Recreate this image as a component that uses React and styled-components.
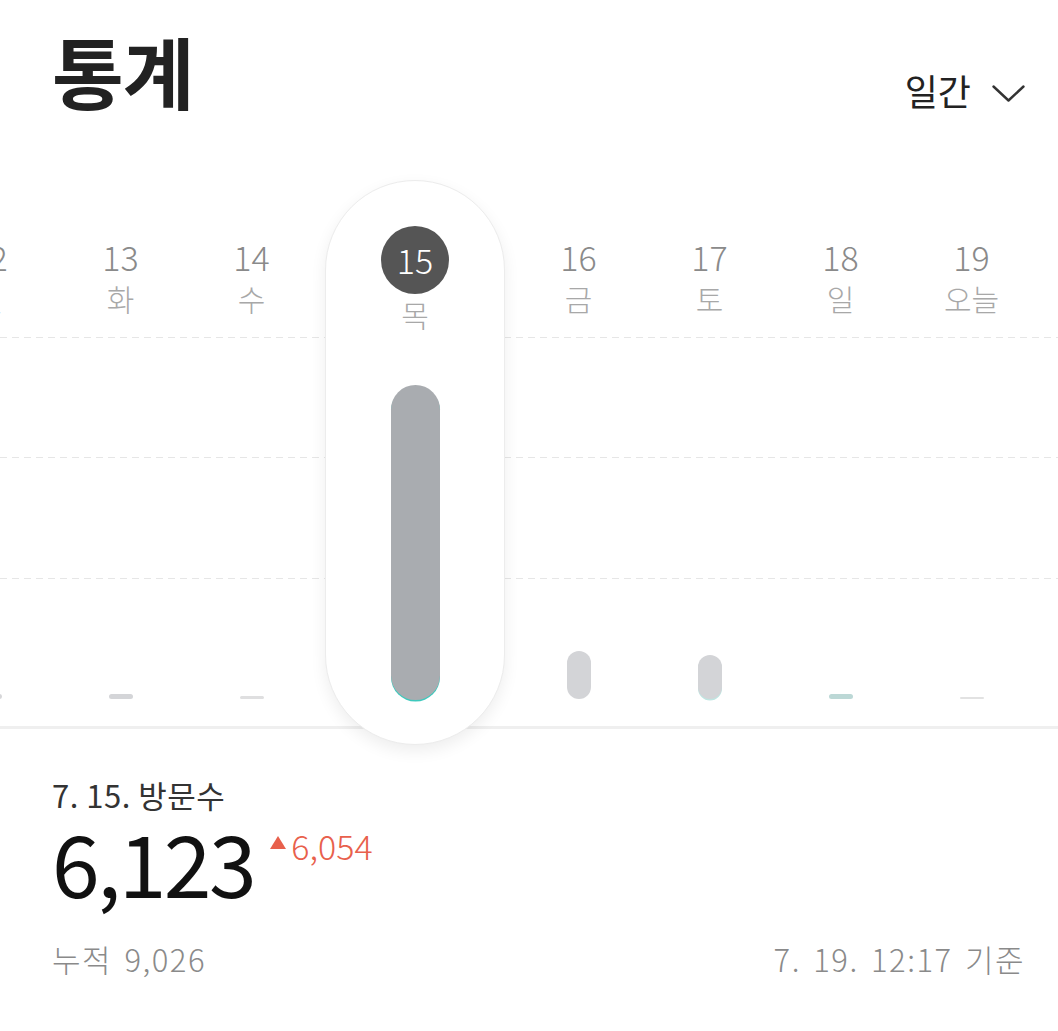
import React from "react";
import styled, { createGlobalStyle } from "styled-components";

const Global = createGlobalStyle`
  html, body { margin: 0; padding: 0; background: #ffffff; }
  body {
    font-family: "Noto Sans CJK KR", "Noto Sans", sans-serif;
    color: #222;
    overflow-x: hidden;
  }
`;

const Page = styled.div`
  width: 1058px;
  min-height: 1031px;
  display: flex;
  flex-direction: column;
`;

const Header = styled.header`
  height: 180px;
  display: flex;
  justify-content: space-between;
  align-items: flex-start;
  padding: 0 33px 0 52px;
  box-sizing: border-box;
`;

const Title = styled.h1`
  margin: 30px 0 0;
  font-size: 78px;
  line-height: 80px;
  font-weight: 700;
  color: #222;
  letter-spacing: -1px;
`;

const PeriodButton = styled.button`
  margin-top: 72px;
  display: flex;
  align-items: center;
  gap: 21px;
  border: 0;
  background: none;
  padding: 0;
  font-family: inherit;
  font-size: 36px;
  line-height: 36px;
  font-weight: 400;
  color: #222;
  cursor: pointer;
`;

const Chevron = styled.svg`
  width: 33px;
  height: 17px;
  margin-top: 6px;
`;

const Chart = styled.section`
  display: grid;
  height: 565px;
`;

const GridLayer = styled.div`
  grid-area: 1 / 1;
  display: flex;
  flex-direction: column;
  padding-top: 157px;
`;

const DashLine = styled.div`
  height: 1px;
  margin-bottom: ${(p) => p.$gap}px;
  background: repeating-linear-gradient(
    to right,
    #e6e6e6 0 7px,
    transparent 7px 12px
  );
`;

const BaseLine = styled.div`
  height: 3px;
  background: #efefef;
`;

const ColumnRow = styled.div`
  grid-area: 1 / 1;
  display: flex;
  margin-left: -76px;
`;

const Column = styled.div`
  flex: 0 0 ${(p) => (p.$selected ? 196 : 131)}px;
  display: flex;
  justify-content: center;
`;

const Card = styled.div`
  width: ${(p) => (p.$selected ? 180 : 131)}px;
  height: 565px;
  box-sizing: border-box;
  display: flex;
  flex-direction: column;
  align-items: center;
  border-radius: 90px;
  ${(p) =>
    p.$selected
      ? `
    background: #fff;
    border: 1px solid #ececec;
    box-shadow: 0 6px 16px rgba(0,0,0,0.07);
  `
      : ``}
`;

const Head = styled.div`
  height: 157px;
  box-sizing: border-box;
  padding-top: ${(p) => (p.$selected ? 45 : 57)}px;
  display: flex;
  flex-direction: column;
  align-items: center;
`;

const DateNum = styled.div`
  font-size: 34px;
  line-height: 40px;
  font-weight: 300;
  color: #8a8a8a;
`;

const DateCircle = styled.div`
  width: 68px;
  height: 68px;
  border-radius: 50%;
  background: #555555;
  color: #fff;
  display: flex;
  align-items: center;
  justify-content: center;
  font-size: 34px;
  line-height: 1;
  font-weight: 300;
`;

const DayLabel = styled.div`
  font-size: 30px;
  line-height: 40px;
  font-weight: 300;
  color: #a8a8a8;
  margin-top: ${(p) => (p.$selected ? 0 : 1)}px;
`;

const Plot = styled.div`
  height: 362px;
  display: flex;
  align-items: flex-end;
  justify-content: center;
`;

const Bar = styled.div`
  width: ${(p) => (p.$selected ? 49 : 24)}px;
  border-radius: ${(p) => (p.$tall ? "25px" : "3px")};
  background: ${(p) => p.$color};
  ${(p) => (p.$accent ? `box-shadow: 0 1.5px 0 0 ${p.$accent};` : ``)}
`;

const Summary = styled.section`
  padding: 32px 33px 0 52px;
  display: flex;
  flex-direction: column;
`;

const SummaryLabel = styled.div`
  font-size: 31px;
  line-height: 36px;
  color: #333;
  font-weight: 400;
  letter-spacing: 0.5px;
`;

const ValueRow = styled.div`
  display: flex;
  align-items: flex-start;
  gap: 16px;
  margin-top: 5px;
`;

const BigValue = styled.div`
  font-size: 86px;
  line-height: 86px;
  font-weight: 400;
  color: #111;
  letter-spacing: -2.5px;
`;

const Delta = styled.div`
  margin-top: 8px;
  display: flex;
  align-items: center;
  gap: 5px;
  font-size: 34px;
  line-height: 40px;
  font-weight: 300;
  color: #e8604c;
`;

const Triangle = styled.span`
  width: 0;
  height: 0;
  border-left: 8px solid transparent;
  border-right: 8px solid transparent;
  border-bottom: 13px solid #e8604c;
  margin-top: -8px;
`;

const Footer = styled.div`
  margin-top: 35px;
  display: flex;
  justify-content: space-between;
  font-size: 31px;
  line-height: 40px;
  font-weight: 300;
  color: #8a8a8a;
  letter-spacing: 1.5px;
  word-spacing: 4px;
`;

const days = [
  { d: "12", w: "월", h: 5, c: "#d6d6d8" },
  { d: "13", w: "화", h: 5, c: "#d4d5d8" },
  { d: "14", w: "수", h: 3, c: "#dfdfe0" },
  { d: "15", w: "목", h: 315, c: "#a9acb0", selected: true, accent: "#3ec9bd" },
  { d: "16", w: "금", h: 48, c: "#d3d4d7" },
  { d: "17", w: "토", h: 44, c: "#d3d4d7", accent: "#bfe6e2" },
  { d: "18", w: "일", h: 5, c: "#bcd8d6" },
  { d: "19", w: "오늘", h: 2, c: "#e2e2e2" },
];

export default function App() {
  return (
    <Page>
      <Global />
      <Header>
        <Title>통계</Title>
        <PeriodButton>
          일간
          <Chevron viewBox="0 0 33 17">
            <polyline
              points="1.5,1.5 16.5,15.5 31.5,1.5"
              fill="none"
              stroke="#333"
              strokeWidth="2.4"
              strokeLinecap="round"
              strokeLinejoin="round"
            />
          </Chevron>
        </PeriodButton>
      </Header>

      <Chart>
        <GridLayer>
          <DashLine $gap={119} />
          <DashLine $gap={120} />
          <DashLine $gap={147} />
          <BaseLine />
        </GridLayer>
        <ColumnRow>
          {days.map((day) => (
            <Column key={day.d} $selected={day.selected}>
              <Card $selected={day.selected}>
                <Head $selected={day.selected}>
                  {day.selected ? (
                    <DateCircle>{day.d}</DateCircle>
                  ) : (
                    <DateNum>{day.d}</DateNum>
                  )}
                  <DayLabel $selected={day.selected}>{day.w}</DayLabel>
                </Head>
                <Plot>
                  <Bar
                    $selected={day.selected}
                    $tall={day.h > 20}
                    $color={day.c}
                    $accent={day.accent}
                    style={{ height: day.h }}
                  />
                </Plot>
              </Card>
            </Column>
          ))}
        </ColumnRow>
      </Chart>

      <Summary>
        <SummaryLabel>7. 15. 방문수</SummaryLabel>
        <ValueRow>
          <BigValue>6,123</BigValue>
          <Delta>
            <Triangle />
            6,054
          </Delta>
        </ValueRow>
        <Footer>
          <span>누적 9,026</span>
          <span>7. 19. 12:17 기준</span>
        </Footer>
      </Summary>
    </Page>
  );
}
